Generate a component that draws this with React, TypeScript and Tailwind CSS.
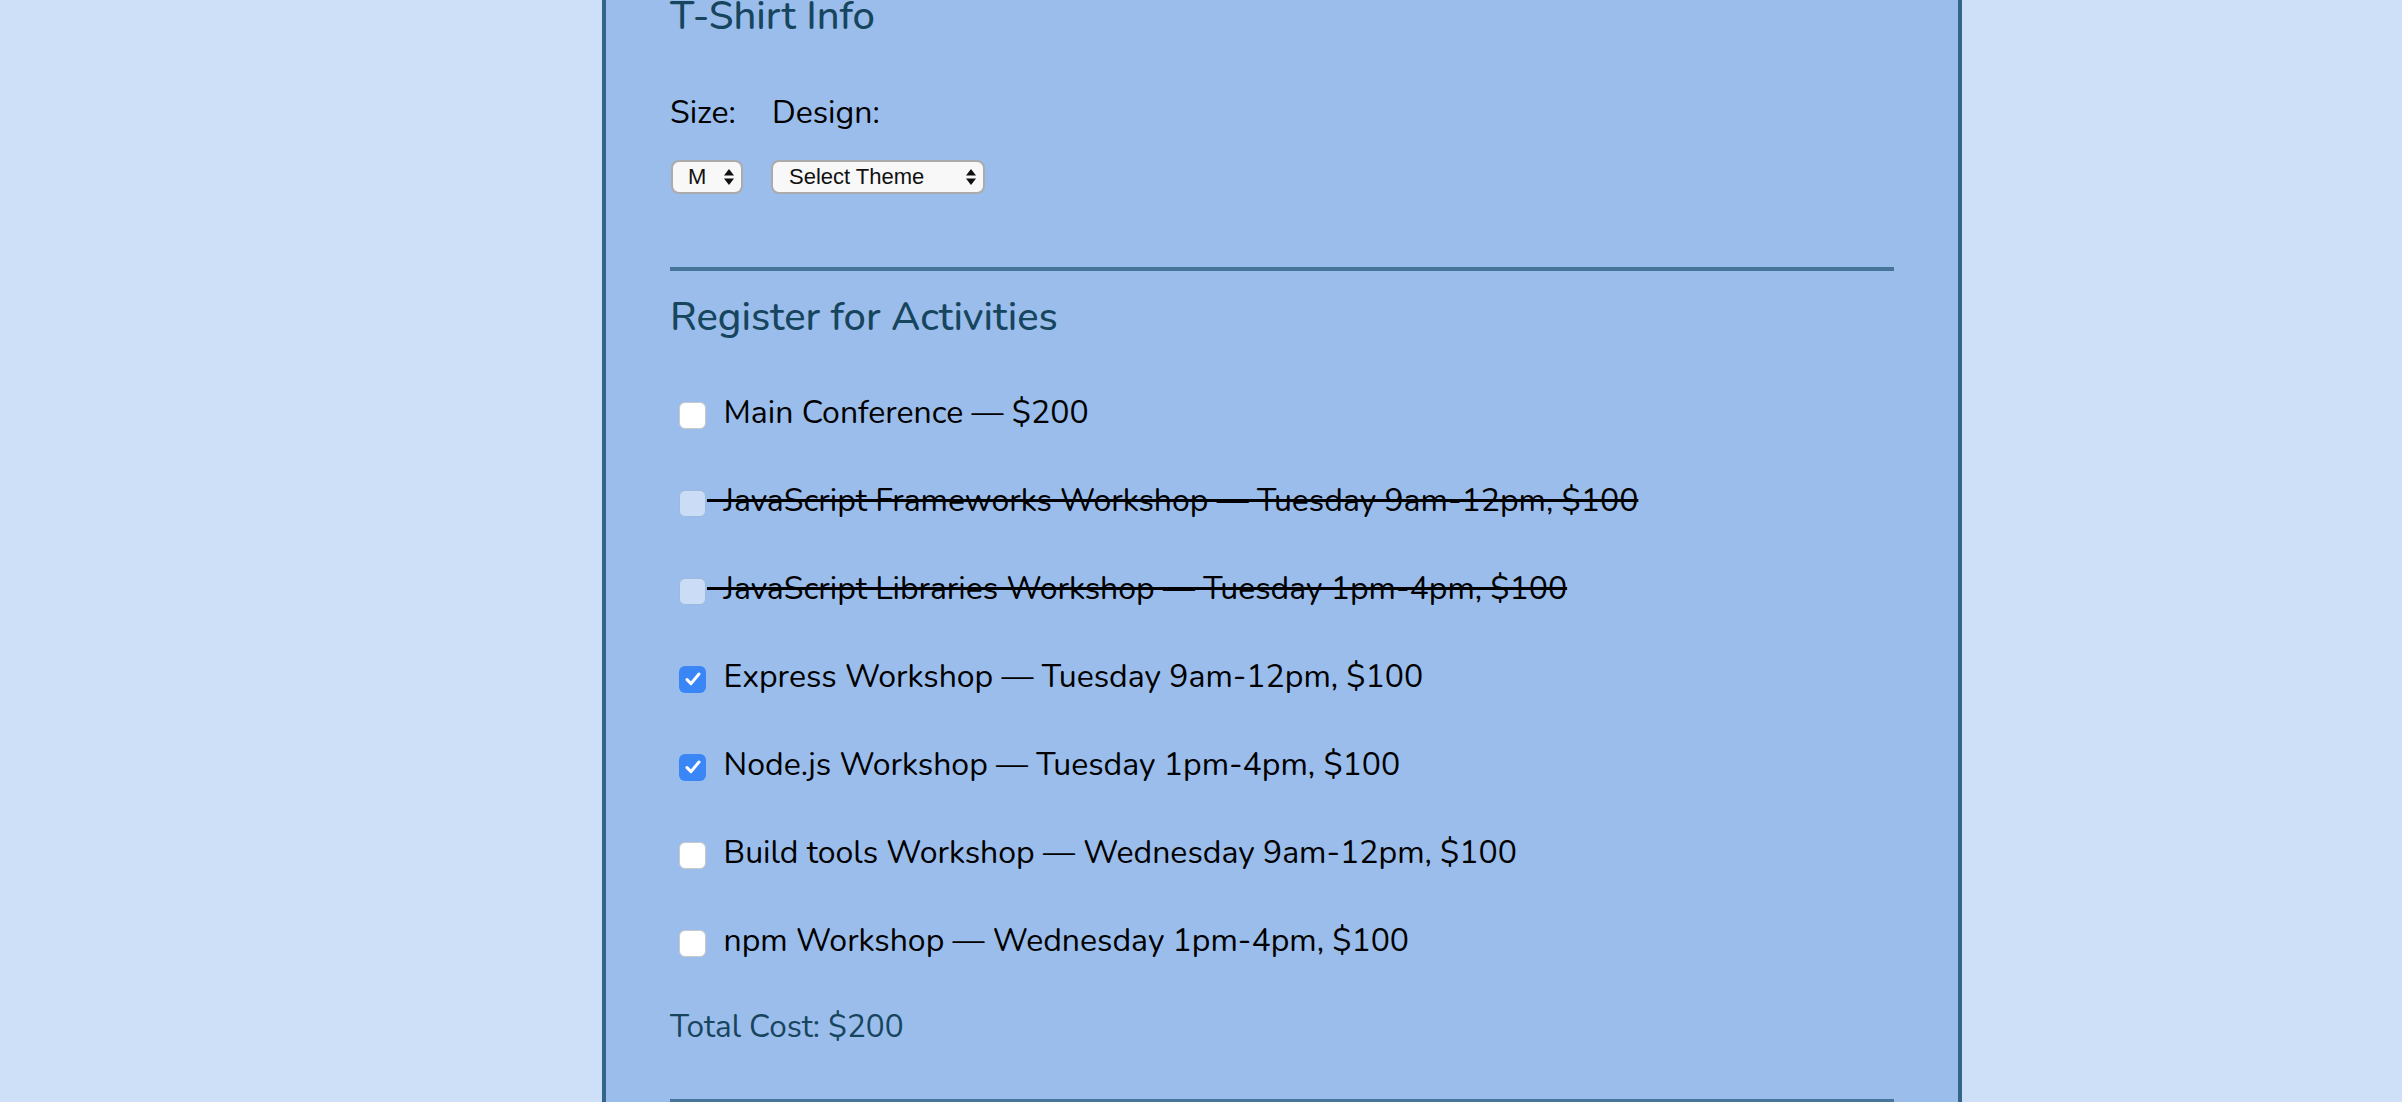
import React from 'react';

type Activity = {
  label: string;
  state: 'open' | 'checked' | 'disabled';
};

const activities: Activity[] = [
  { label: 'Main Conference — $200', state: 'open' },
  { label: 'JavaScript Frameworks Workshop — Tuesday 9am-12pm, $100', state: 'disabled' },
  { label: 'JavaScript Libraries Workshop — Tuesday 1pm-4pm, $100', state: 'disabled' },
  { label: 'Express Workshop — Tuesday 9am-12pm, $100', state: 'checked' },
  { label: 'Node.js Workshop — Tuesday 1pm-4pm, $100', state: 'checked' },
  { label: 'Build tools Workshop — Wednesday 9am-12pm, $100', state: 'open' },
  { label: 'npm Workshop — Wednesday 1pm-4pm, $100', state: 'open' },
];

function SelectArrows() {
  return (
    <svg width="12" height="20" viewBox="0 0 12 20" className="pointer-events-none absolute top-1/2 -translate-y-1/2 right-[8px]">
      <path d="M1 8.5 L6 2 L11 8.5 Z" fill="#111" />
      <path d="M1 11.5 L6 18 L11 11.5 Z" fill="#111" />
    </svg>
  );
}

function Box({ state }: { state: Activity['state'] }) {
  if (state === 'checked') {
    return (
      <span className="flex h-[27px] w-[27px] shrink-0 items-center justify-center rounded-[6px] bg-[#3b86f7]">
        <svg width="18" height="18" viewBox="0 0 18 18">
          <path d="M3 9.6 L7 13.6 L15 4" fill="none" stroke="#fff" strokeWidth="3" strokeLinecap="round" strokeLinejoin="round" />
        </svg>
      </span>
    );
  }
  if (state === 'disabled') {
    return <span className="block h-[27px] w-[27px] shrink-0 rounded-[6px] border border-[#9fb8dd] bg-[#cbddf6]" />;
  }
  return <span className="block h-[27px] w-[27px] shrink-0 rounded-[6px] border border-[#c9c9c9] bg-white" />;
}

export default function App() {
  return (
    <div className="h-screen overflow-hidden bg-[#cde0f8] font-['Nunito','Lato',sans-serif]">
      <div className="ml-[602px] h-[1200px] w-[1360px] border-x-4 border-[#33658a] bg-[#9abdec] px-16">
        {/* T-Shirt section */}
        <h2 className="-mt-[8px] text-[40px] font-medium leading-[48px] text-[#17455e]">T-Shirt Info</h2>

        <div className="mt-[55px] flex gap-[36px] text-[32px] leading-[36px] text-black">
          <span>Size:</span>
          <span>Design:</span>
        </div>

        <div className="mt-[29px] flex gap-[28px] font-['Liberation_Sans',sans-serif] text-[22px] text-[#111]">
          <div className="relative ml-[1px]">
            <select
              defaultValue="M"
              className="h-[34px] w-[72px] appearance-none rounded-[8px] border-2 border-[#ababab] bg-[#f8f8f8] pl-[15px] leading-none outline-none"
            >
              <option>S</option>
              <option>M</option>
              <option>L</option>
            </select>
            <SelectArrows />
          </div>
          <div className="relative">
            <select
              defaultValue="Select Theme"
              className="h-[34px] w-[214px] appearance-none rounded-[8px] border-2 border-[#ababab] bg-[#f8f8f8] pl-[16px] leading-none outline-none"
            >
              <option>Select Theme</option>
              <option>JS Puns</option>
              <option>I ♥ JS</option>
            </select>
            <SelectArrows />
          </div>
        </div>

        <div className="mt-[73px] h-[4px] bg-[#467599]" />

        {/* Activities */}
        <h2 className="mt-[23px] text-[40px] font-medium leading-[46px] text-[#17455e]">Register for Activities</h2>

        <div className="mt-[31px] flex flex-col">
          {activities.map((a) => (
            <label key={a.label} className="flex h-[88px] items-center text-[32px] text-black">
              <span className="ml-[9px] mr-[1px]">
                <Box state={a.state} />
              </span>
              <span
                className={
                  a.state === 'disabled'
                    ? 'mb-[5px] whitespace-pre leading-[36px] line-through'
                    : 'mb-[5px] whitespace-pre leading-[36px]'
                }
              >
                {'  ' + a.label}
              </span>
            </label>
          ))}
        </div>

        <p className="mt-[22px] text-[31.5px] leading-[36px] text-[#17455e]">Total Cost: $200</p>

        <div className="mt-[54px] h-[4px] bg-[#467599]" />
      </div>
    </div>
  );
}
